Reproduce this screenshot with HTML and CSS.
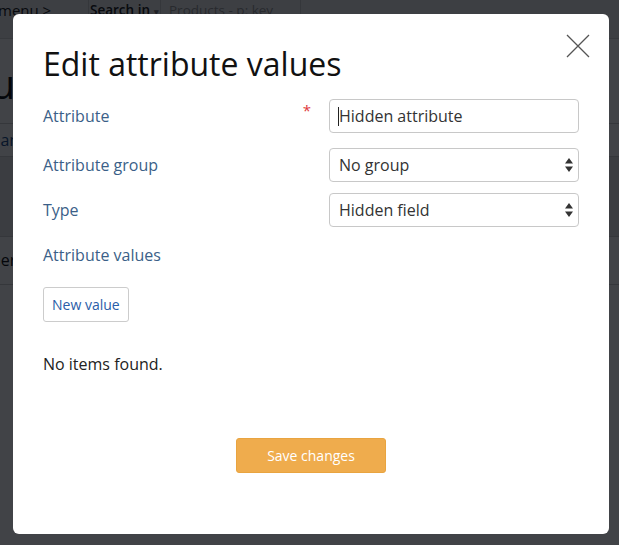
FILE: index.html
```html
<!DOCTYPE html>
<html>
<head>
<meta charset="utf-8">
<link rel="stylesheet" href="styles.css">
</head>
<body>
<div class="page">
  <header class="topbar">
    <span class="crumb">menu &gt;</span>
    <div class="search">
      <span class="search-in">Search in <span class="caret">▾</span></span>
      <span class="search-field">Products - p: key</span>
    </div>
  </header>
  <div class="page-body">
    <h1 class="page-title">Attribut</h1>
    <div class="tabs"><span class="tab">Man</span></div>
    <div class="toolbar"></div>
    <div class="row-item"><span class="row-text">Order</span></div>
  </div>
</div>

<div class="backdrop"></div>

<div class="modal" role="dialog">
  <button class="close" aria-label="Close">
    <svg width="24" height="24" viewBox="0 0 24 24"><path d="M1 1 L23 23 M23 1 L1 23" stroke="#555" stroke-width="1.3" fill="none"/></svg>
  </button>
  <h2 class="modal-title">Edit attribute values</h2>
  <form class="form">
    <div class="form-row">
      <label class="label">Attribute<span class="req">*</span></label>
      <div class="control">
        <input class="input" type="text" value="Hidden attribute">
        <span class="cursor"></span>
      </div>
    </div>
    <div class="form-row gap-lg">
      <label class="label">Attribute group</label>
      <div class="control">
        <select class="input select"><option>No group</option></select>
        <svg class="arrows" width="8" height="14" viewBox="0 0 8 14"><path d="M4 0 L8 5.5 L0 5.5 Z M4 14 L8 8.5 L0 8.5 Z" fill="#333"/></svg>
      </div>
    </div>
    <div class="form-row">
      <label class="label">Type</label>
      <div class="control">
        <select class="input select"><option>Hidden field</option></select>
        <svg class="arrows" width="8" height="14" viewBox="0 0 8 14"><path d="M4 0 L8 5.5 L0 5.5 Z M4 14 L8 8.5 L0 8.5 Z" fill="#333"/></svg>
      </div>
    </div>
    <div class="form-row">
      <label class="label">Attribute values</label>
    </div>
    <div class="new-wrap"><button type="button" class="btn-default">New value</button></div>
    <p class="empty">No items found.</p>
    <div class="actions"><button type="button" class="btn-primary">Save changes</button></div>
  </form>
</div>
</body>
</html>
```
FILE: styles.css
```css
* { box-sizing: border-box; }
html, body { margin: 0; padding: 0; }
body {
  width: 619px;
  height: 545px;
  overflow: hidden;
  font-family: "Open Sans", "Noto Sans", sans-serif;
  background: #fafafa;
  position: relative;
}
.page { width: 619px; height: 545px; overflow: hidden; }
.topbar {
  height: 39px;
  background: #ececec;
  border-bottom: 1px solid #d5d5d5;
  display: flex;
  align-items: flex-start;
}
.crumb {
  width: 90px;
  margin-left: -2px;
  font-size: 15px;
  line-height: 20px;
  color: #222;
  white-space: nowrap;
}
.search {
  display: flex;
  height: 38px;
  border-left: 1px solid #ccc;
  border-right: 1px solid #ccc;
  width: 213px;
}
.search-in {
  width: 72px;
  padding-left: 1px;
  font-size: 13.5px;
  line-height: 20px;
  font-weight: 600;
  color: #222;
  border-right: 1px solid #ccc;
  white-space: nowrap;
}
.caret { font-size: 9px; color: #777; }
.search-field {
  padding-left: 8px;
  font-size: 13.5px;
  line-height: 20px;
  color: #999;
  white-space: nowrap;
}
.page-body { position: relative; }
.page-title {
  margin: 0;
  height: 84px;
  padding-top: 20px;
  margin-left: -114px;
  font-size: 40px;
  line-height: 50px;
  font-weight: 400;
  color: #111;
  white-space: nowrap;
}
.tabs {
  height: 34px;
  border-top: 1px solid #ccc;
  border-bottom: 1px solid #ccc;
  margin-left: -14px;
  font-size: 16px;
  line-height: 32px;
  color: #1d4f8a;
}
.toolbar {
  height: 80px;
  background: #e2e2e2;
  border-bottom: 1px solid #ccc;
}
.row-item {
  height: 48px;
  border-bottom: 1px solid #ccc;
  margin-left: -28px;
  font-size: 16px;
  line-height: 46px;
  color: #111;
  white-space: nowrap;
}
.backdrop {
  position: absolute;
  inset: 0;
  background: rgba(0, 3, 8, 0.74);
}
.modal {
  position: absolute;
  left: 13px;
  top: 14px;
  width: 596px;
  height: 520px;
  background: #fff;
  border-radius: 6px;
  padding: 0 30px;
}
.close {
  position: absolute;
  right: 19px;
  top: 20px;
  width: 24px;
  height: 24px;
  padding: 0;
  border: 0;
  background: none;
}
.close svg { display: block; }
.modal-title {
  margin: 0;
  padding-top: 28px;
  height: 85px;
  font-size: 32px;
  font-weight: 400;
  color: #111;
}
.form { display: flex; flex-direction: column; }
.form-row {
  display: grid;
  grid-template-columns: 1fr 250px;
  column-gap: 18px;
  align-items: center;
  min-height: 34px;
  margin-bottom: 11px;
}
.form-row.gap-lg { margin-top: 4px; }
.label {
  display: flex;
  justify-content: space-between;
  font-size: 16px;
  color: #3b5f88;
}
.req { color: #e0393e; font-size: 15px; line-height: 1; margin-top: -2px; }
.control { position: relative; height: 34px; }
.input {
  width: 250px;
  height: 34px;
  border: 1px solid #c8c8c8;
  border-radius: 4px;
  padding: 0 9px;
  font-family: inherit;
  font-size: 16px;
  color: #333;
  background: #fff;
  outline: none;
  appearance: none;
  -webkit-appearance: none;
}
.cursor {
  position: absolute;
  left: 9px;
  top: 8px;
  width: 1px;
  height: 19px;
  background: #222;
}
.arrows {
  position: absolute;
  right: 6px;
  top: 10px;
  pointer-events: none;
}
.new-wrap { margin-top: 4px; }
.btn-default {
  height: 35px;
  padding: 0 8px;
  border: 1px solid #ccc;
  border-radius: 3px;
  background: #fff;
  font-family: inherit;
  font-size: 14px;
  color: #2a5da8;
}
.empty {
  margin: 31px 0 0;
  font-size: 16px;
  color: #222;
}
.actions {
  display: flex;
  justify-content: center;
  margin-top: 63px;
}
.btn-primary {
  width: 150px;
  height: 35px;
  border: 1px solid #e9a440;
  border-radius: 3px;
  background: #efac4d;
  color: #fff;
  font-family: inherit;
  font-size: 14px;
}
```
